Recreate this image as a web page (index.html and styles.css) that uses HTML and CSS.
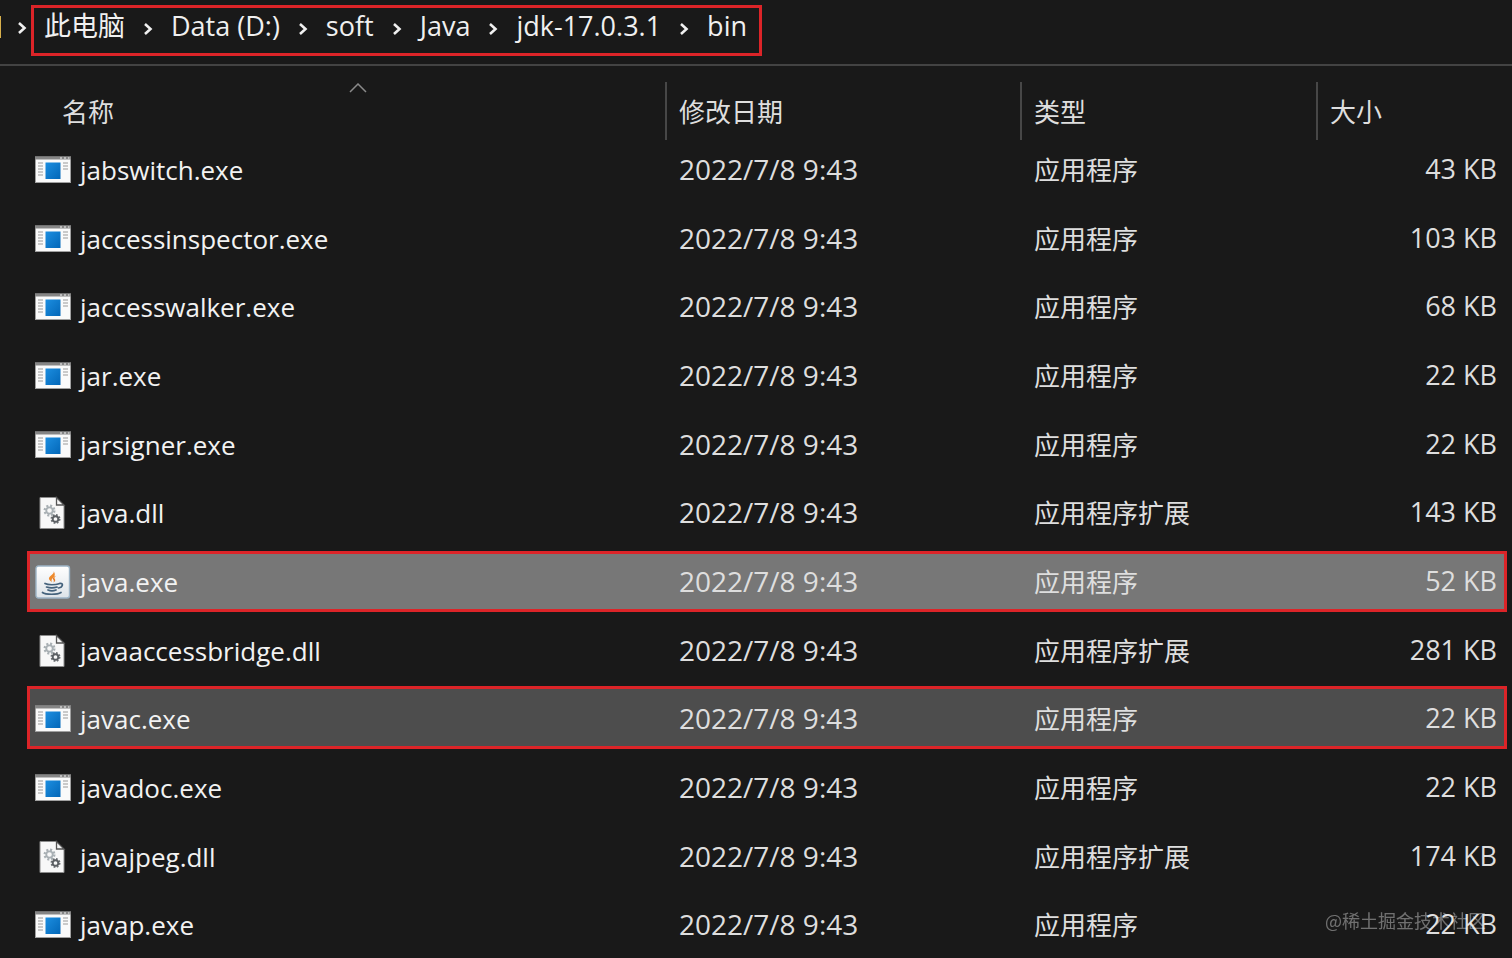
FILE: index.html
```html
<!DOCTYPE html>
<html lang="zh-CN">

<head>
    <title>bin</title>
    <meta charset="utf-8">
    <meta name="viewport" content="width=device-width, initial-scale=1">
    <link rel="stylesheet" href="styles.css">
</head>

<body>
    <svg class="defs" aria-hidden="true">
        <symbol id="chevron" viewBox="0 0 10 14">
            <path d="M2 2l5.500 5L2 12" fill="none" stroke="#f0f0f0" stroke-width="2.600" />
        </symbol>
        <symbol id="exe" viewBox="0 0 36 28">
            <rect x="0.500" y="1" width="35" height="25.500" fill="#fafafa" stroke="#a0a0a0" />
            <rect x="0" y="0.500" width="36" height="3" fill="#858585" />
            <path d="M25 2h2M29 2h2M33 2h1.500" stroke="#d0d0d0" stroke-width="1.500" />
            <path d="M3 7h5M3 10h5M3 13h5M3 16h5M3 19h5M28 7h5M28 10h5M28 13h5" stroke="#9a9a9a" stroke-width="1.200" />
            <rect x="10.500" y="6.500" width="15" height="16.500" fill="url(#blue)" />
        </symbol>
        <symbol id="dll" viewBox="0 0 36 34">
            <path d="M5 1.500h16.500l7.500 7.500v23.500H5z" fill="#f8f8f8" stroke="#8c8c8c" />
            <path d="M21.500 1.500v7.500h7.500z" fill="#f5f5f5" stroke="#555" stroke-width="1.300" />
            <circle cx="14.500" cy="14.500" r="4.800" fill="none" stroke="#a9b0b4" stroke-width="2.400" stroke-dasharray="2 1.770" />
            <circle cx="14.500" cy="14.500" r="3.200" fill="none" stroke="#a9b0b4" stroke-width="1.800" />
            <circle cx="20.500" cy="23" r="4" fill="none" stroke="#6e7276" stroke-width="2" stroke-dasharray="1.700 1.442" />
            <circle cx="20.500" cy="23" r="2.800" fill="none" stroke="#5c6064" stroke-width="1.900" />
        </symbol>
        <symbol id="java" viewBox="0 0 36 34">
            <rect x="1" y="1" width="33.500" height="32" rx="2.500" fill="url(#tile)" stroke="#9db4c6" stroke-width="1.400" />
            <path d="M18.500 6c2 3-5.500 5-4.500 8 .4 1.300 2 2 3 3.500-1-3 0-3.500 1.500-5 1.500-1.700 2-3.500 0-6.500z" fill="#ee8a2c" />
            <path d="M21.500 10.500c-2.500 1-4.500 2.500-3 4.500.7 1 .3 2-.5 2.800 3.500-2 2-3.300 1.500-4.300-.5-1 .7-2 2-3z" fill="#e67a22" />
            <path d="M10 18.500c3 1.700 10.500 1.500 14 .2M11.500 22c3 1 7.500 1 10.500 0M13 25c2 .8 6 .8 8 0M24.500 18.500c4.500-1 3.500 4-1 4.500M7.500 27.500c3 2.300 15 2.300 18.500 0" fill="none" stroke="#44627c" stroke-width="1.700" stroke-linecap="round" />
        </symbol>
        <linearGradient id="blue" x1="0" y1="0" x2="1" y2="1">
            <stop offset="0" stop-color="#1c8ee0" />
            <stop offset="1" stop-color="#0367b8" />
        </linearGradient>
        <linearGradient id="tile" x1="0" y1="0" x2="0" y2="1">
            <stop offset="0" stop-color="#ffffff" />
            <stop offset="1" stop-color="#dde3e8" />
        </linearGradient>
    </svg>

    <nav class="address">
        <span class="folder"></span>
        <svg class="chevron"><use href="#chevron" /></svg>
        <div class="path">
            <a href="#">此电脑</a>
            <svg class="chevron"><use href="#chevron" /></svg>
            <a href="#">Data (D:)</a>
            <svg class="chevron"><use href="#chevron" /></svg>
            <a href="#">soft</a>
            <svg class="chevron"><use href="#chevron" /></svg>
            <a href="#">Java</a>
            <svg class="chevron"><use href="#chevron" /></svg>
            <a href="#">jdk-17.0.3.1</a>
            <svg class="chevron"><use href="#chevron" /></svg>
            <a href="#">bin</a>
        </div>
    </nav>

    <table class="files">
        <colgroup>
            <col>
            <col class="col-date">
            <col class="col-type">
            <col class="col-size">
        </colgroup>
        <thead>
            <tr>
                <th class="name">
                    <svg class="sort" viewBox="0 0 18 10"><path d="M1 9l8-8 8 8" fill="none" stroke="#8a8a8a" stroke-width="1.500" /></svg>
                    名称
                </th>
                <th>修改日期</th>
                <th>类型</th>
                <th>大小</th>
            </tr>
        </thead>
        <tbody>
            <tr>
                <td class="name"><div class="file"><svg class="icon"><use href="#exe" /></svg>jabswitch.exe</div></td>
                <td class="date">2022/7/8 9:43</td>
                <td class="type">应用程序</td>
                <td class="size">43 KB</td>
            </tr>
            <tr>
                <td class="name"><div class="file"><svg class="icon"><use href="#exe" /></svg>jaccessinspector.exe</div></td>
                <td class="date">2022/7/8 9:43</td>
                <td class="type">应用程序</td>
                <td class="size">103 KB</td>
            </tr>
            <tr>
                <td class="name"><div class="file"><svg class="icon"><use href="#exe" /></svg>jaccesswalker.exe</div></td>
                <td class="date">2022/7/8 9:43</td>
                <td class="type">应用程序</td>
                <td class="size">68 KB</td>
            </tr>
            <tr>
                <td class="name"><div class="file"><svg class="icon"><use href="#exe" /></svg>jar.exe</div></td>
                <td class="date">2022/7/8 9:43</td>
                <td class="type">应用程序</td>
                <td class="size">22 KB</td>
            </tr>
            <tr>
                <td class="name"><div class="file"><svg class="icon"><use href="#exe" /></svg>jarsigner.exe</div></td>
                <td class="date">2022/7/8 9:43</td>
                <td class="type">应用程序</td>
                <td class="size">22 KB</td>
            </tr>
            <tr>
                <td class="name"><div class="file"><svg class="icon tall"><use href="#dll" /></svg>java.dll</div></td>
                <td class="date">2022/7/8 9:43</td>
                <td class="type">应用程序扩展</td>
                <td class="size">143 KB</td>
            </tr>
            <tr class="marked selected">
                <td class="name"><div class="file"><svg class="icon tall"><use href="#java" /></svg>java.exe</div></td>
                <td class="date">2022/7/8 9:43</td>
                <td class="type">应用程序</td>
                <td class="size">52 KB</td>
            </tr>
            <tr>
                <td class="name"><div class="file"><svg class="icon tall"><use href="#dll" /></svg>javaaccessbridge.dll</div></td>
                <td class="date">2022/7/8 9:43</td>
                <td class="type">应用程序扩展</td>
                <td class="size">281 KB</td>
            </tr>
            <tr class="marked hovered">
                <td class="name"><div class="file"><svg class="icon"><use href="#exe" /></svg>javac.exe</div></td>
                <td class="date">2022/7/8 9:43</td>
                <td class="type">应用程序</td>
                <td class="size">22 KB</td>
            </tr>
            <tr>
                <td class="name"><div class="file"><svg class="icon"><use href="#exe" /></svg>javadoc.exe</div></td>
                <td class="date">2022/7/8 9:43</td>
                <td class="type">应用程序</td>
                <td class="size">22 KB</td>
            </tr>
            <tr>
                <td class="name"><div class="file"><svg class="icon tall"><use href="#dll" /></svg>javajpeg.dll</div></td>
                <td class="date">2022/7/8 9:43</td>
                <td class="type">应用程序扩展</td>
                <td class="size">174 KB</td>
            </tr>
            <tr>
                <td class="name"><div class="file"><svg class="icon"><use href="#exe" /></svg>javap.exe</div></td>
                <td class="date">2022/7/8 9:43</td>
                <td class="type">应用程序</td>
                <td class="size">22 KB</td>
            </tr>
        </tbody>
    </table>

    <div class="watermark">@稀土掘金技术社区</div>
</body>

</html>
```

FILE: styles.css
```css
* {
    box-sizing: border-box;
}

body {
    margin: 0;
    height: 100vh;
    overflow: hidden;
    background-color: #191919;
    color: #dedede;
    font-family: "Open Sans", "Noto Sans CJK SC", sans-serif;
    font-size: 26px;
    line-height: 36px;
}

.defs {
    position: absolute;
    width: 0;
    height: 0;
}

/* address bar */
.address {
    display: flex;
    align-items: flex-start;
    height: 66px;
    padding-top: 5px;
    border-bottom: 2px solid #434343;
}

.folder {
    width: 1px;
    height: 22px;
    margin: 11px 16px 0 0;
    background-color: #d8b04c;
}

.address > .chevron {
    margin: 16px 4px 0 0;
}

.chevron {
    flex: none;
    width: 10px;
    height: 14px;
}

.path {
    display: flex;
    align-items: center;
    gap: 18px;
    height: 51px;
    padding: 0 12px 0 10px;
    border: 3px solid #dc2428;
    font-size: 27px;
    white-space: nowrap;
}

.path .chevron {
    margin-bottom: 4px;
}

.path a {
    padding-bottom: 9px;
    color: #f0f0f0;
    text-decoration: none;
}

/* file list */
.files {
    width: 100%;
    table-layout: fixed;
    border-collapse: collapse;
}

.col-date {
    width: 355px;
}

.col-type {
    width: 296px;
}

.col-size {
    width: 196px;
}

th,
td {
    height: 69px;
    padding: 0 0 0 14px;
    text-align: left;
    vertical-align: middle;
    white-space: nowrap;
}

tbody tr:nth-child(3n) td {
    height: 68px;
}

th {
    position: relative;
    padding-top: 22px;
    font-weight: normal;
}

th + th::before {
    content: "";
    position: absolute;
    top: 16px;
    bottom: -5px;
    left: 0;
    width: 2px;
    background-color: #474747;
}

th.name {
    padding-left: 62px;
}

.sort {
    position: absolute;
    top: 17px;
    left: 50px;
    right: 0;
    width: 18px;
    height: 10px;
    margin: 0 auto;
}

td.name {
    padding-left: 35px;
    color: #f2f2f2;
}

td.date {
    padding-bottom: 2px;
    font-size: 28px;
}

td.size {
    padding: 0 15px 2px 0;
    font-size: 27px;
    text-align: right;
}

.file {
    display: flex;
    align-items: center;
    gap: 9px;
}

.icon {
    flex: none;
    width: 36px;
    height: 28px;
}

.icon.tall {
    height: 34px;
}

.marked {
    position: relative;
    isolation: isolate;
}

.marked .name::before {
    content: "";
    position: absolute;
    z-index: -1;
    inset: 4px 5px 4px 27px;
    border: 3px solid #dc2428;
}

.selected .name::before {
    background-color: #777777;
}

.hovered .name::before {
    top: 1px;
    background-color: #4d4d4d;
}

.watermark {
    position: fixed;
    right: 26px;
    bottom: 25px;
    color: rgba(255, 255, 255, 0.38);
    font-family: "Noto Sans CJK SC", sans-serif;
    font-size: 18px;
    line-height: 26px;
}
```
